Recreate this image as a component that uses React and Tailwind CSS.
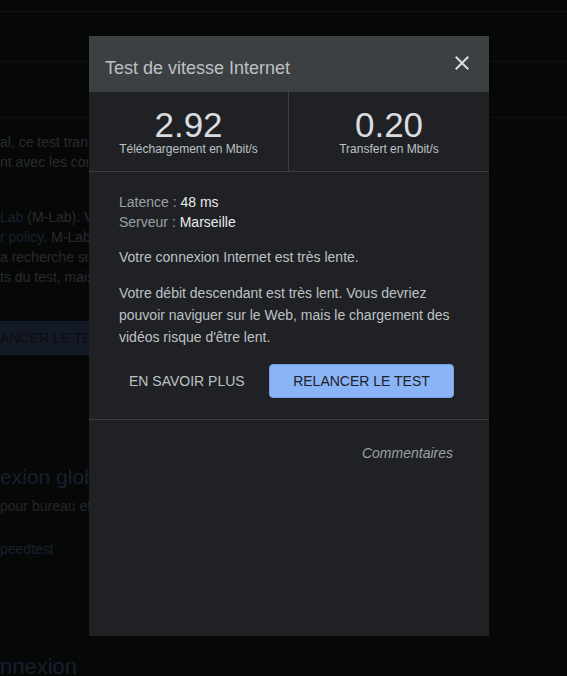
import React from 'react';

// Faded page that sits behind the modal overlay
const BackgroundPage = () => {
  return (
    <div className="w-full text-[14px] leading-[20px] text-[#292b2e] whitespace-nowrap">
      <div className="h-[12px] border-b border-[#111313]" />
      <div className="h-[50px] border-b border-[#0f1111]" />
      <div className="h-[56px] border-b border-[#0f1111]" />

      <div className="w-[89px] overflow-hidden">
        <div className="mt-[14px]">
          <p>al, ce test transmet</p>
          <p>nt avec les conditions</p>
        </div>

        <div className="mt-[35px]">
          <p><span className="text-[#19202f]">Lab</span> (M-Lab). Vos</p>
          <p><span className="text-[#19202f]">r policy</span>. M-Lab</p>
          <p>a recherche sur</p>
          <p>ts du test, mais</p>
        </div>

        <div className="mt-[34px] h-[34px] w-[89px] bg-[#141a25] flex items-center text-[#0b0d12]">
          ANCER LE TEST
        </div>

        <p className="mt-[108px] text-[21px] leading-[28px] text-[#1a1f2e]">exion globale</p>
        <p className="mt-[5px] text-[#242629]">pour bureau et</p>
        <p className="mt-[23px] text-[#1a2030]">peedtest</p>
        <p className="mt-[94px] text-[22px] leading-[28px] text-[#1a1f2e]">nnexion</p>
      </div>
    </div>
  );
};

const CloseIcon = () => (
  <svg width="24" height="24" viewBox="0 0 24 24" fill="#dadce0">
    <path d="M19 6.41L17.59 5 12 10.59 6.41 5 5 6.41 10.59 12 5 17.59 6.41 19 12 13.41 17.59 19 19 17.59 13.41 12z" />
  </svg>
);

const Stat = ({ value, label, divider }) => (
  <div className={`flex flex-col items-center pt-[15px] ${divider ? 'border-r border-[#3c4043]' : ''}`}>
    <span className="text-[35px] leading-[35px] text-[#dadce0]">{value}</span>
    <span className="text-[12px] leading-[14px] text-[#bdc1c6]">{label}</span>
  </div>
);

const SpeedTestDialog = () => {
  return (
    <div className="w-[400px] h-[600px] bg-[#202124] flex flex-col">
      {/* Header */}
      <div className="h-[56px] bg-[#3c4043] flex items-start justify-between">
        <h2 className="mt-[22px] ml-[16px] text-[18px] leading-[20px] text-[#bdc1c6]">Test de vitesse Internet</h2>
        <button className="mt-[15px] mr-[15px]">
          <CloseIcon />
        </button>
      </div>

      {/* Results */}
      <div className="h-[80px] grid grid-cols-2 border-b border-[#3c4043]">
        <Stat value="2.92" label="Téléchargement en Mbit/s" divider />
        <Stat value="0.20" label="Transfert en Mbit/s" />
      </div>

      {/* Details */}
      <div className="px-[30px] pt-[20px] pb-[21px] border-b border-[#3c4043] text-[14px] text-[#bdc1c6]">
        <div className="leading-[20px]">
          <p><span className="text-[#9aa0a6]">Latence : </span><span className="text-[#e8eaed]">48 ms</span></p>
          <p><span className="text-[#9aa0a6]">Serveur : </span><span className="text-[#e8eaed]">Marseille</span></p>
        </div>
        <p className="mt-[15px] leading-[20px]">Votre connexion Internet est très lente.</p>
        <p className="mt-[15px] leading-[22px]">
          Votre débit descendant est très lent. Vous devriez pouvoir naviguer sur le Web, mais le chargement des vidéos risque d'être lent.
        </p>
        <div className="mt-[16px] flex items-center">
          <button className="h-[34px] w-[136px] pl-[10px] text-left text-[14px] text-[#bdc1c6] uppercase">En savoir plus</button>
          <button className="ml-[14px] h-[34px] w-[185px] rounded-[4px] bg-[#8ab4f8] border border-[#7a9fdc] text-[14px] text-[#202124] uppercase">
            Relancer le test
          </button>
        </div>
      </div>

      {/* Feedback */}
      <div className="pt-[21px] pr-[36px] text-right">
        <span className="text-[14px] leading-[20px] italic text-[#9aa0a6]">Commentaires</span>
      </div>
    </div>
  );
};

export default function App() {
  return (
    <div className="relative h-[676px] w-full overflow-hidden bg-[#060808] font-['Liberation_Sans',Arial,sans-serif]">
      <BackgroundPage />
      <div className="absolute inset-0 flex justify-start pl-[89px] pt-[36px]">
        <SpeedTestDialog />
      </div>
    </div>
  );
}
